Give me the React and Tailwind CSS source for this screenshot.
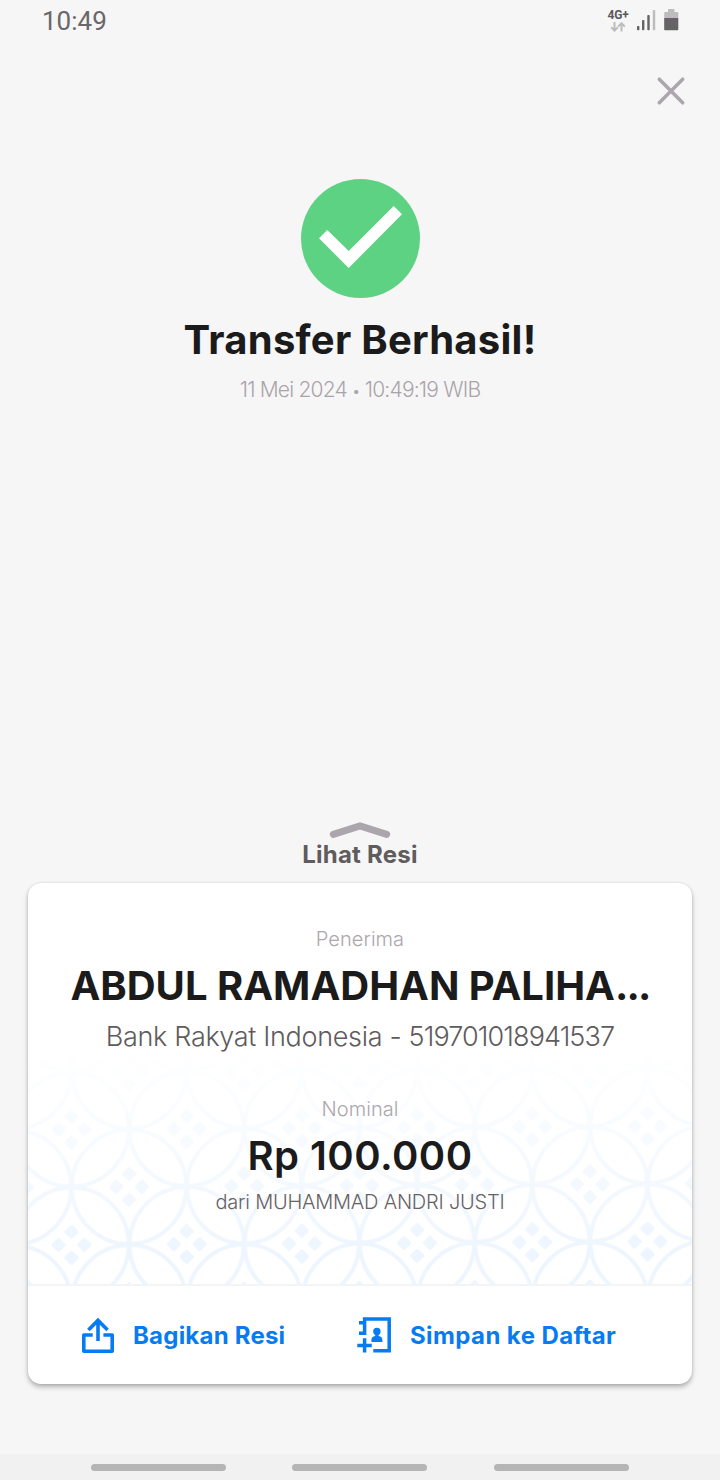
import React from "react";

const receipt = {
  date: "11 Mei 2024",
  time: "10:49:19 WIB",
  recipient: "ABDUL RAMADHAN PALIHA",
  bank: "Bank Rakyat Indonesia -",
  account: "519701018941537",
  amount: "Rp 100.000",
  sender: "dari MUHAMMAD ANDRI JUSTI",
};

const StatusBar = () => (
  <header className="flex h-11 items-start justify-between pl-[42px] pr-[41px] font-['Roboto',sans-serif]">
    <span className="pt-[6px] text-[26px] leading-[30px] text-[#696769]">10:49</span>
    <div className="flex items-start pt-[8px]">
      <div className="flex w-[22px] flex-col items-center">
        <span className="text-[12px] font-bold leading-[14px] tracking-[-0.2px] text-[#5b595b]">4G+</span>
        <svg width="16" height="10" viewBox="0 0 16 10" fill="none" stroke="#bdbbbd" strokeWidth="2">
          <path d="M4.5 0V8.5M1.2 5.2L4.5 8.6L7.8 5.2M11.5 9.5V1M8.2 4.6L11.5 1.2L14.8 4.6" />
        </svg>
      </div>
      <svg className="ml-[8px]" width="19" height="23" viewBox="0 0 19 23">
        <g fill="#656365">
          <rect x="0" y="18" width="2.4" height="4.2" rx="0.8" />
          <rect x="5" y="12" width="2.4" height="10.2" rx="0.8" />
          <rect x="10.3" y="7" width="2.4" height="15.2" rx="0.8" />
        </g>
        <rect x="15.8" y="2" width="2.4" height="20.2" rx="0.8" fill="#bdbbbd" />
      </svg>
      <svg className="ml-[8px]" width="15" height="23" viewBox="0 0 15 23">
        <path d="M4 1.5Q4 1 4.5 1H10Q10.5 1 10.5 1.5V4H13.5Q14.3 4 14.3 4.8V10H0.2V4.8Q0.2 4 1 4H4Z" fill="#bdbbbd" />
        <path d="M0.2 10H14.3V21.4Q14.3 22.2 13.5 22.2H1Q0.2 22.2 0.2 21.4Z" fill="#656365" />
      </svg>
    </div>
  </header>
);

// Faded batik pattern behind the nominal section
const BatikPattern = () => (
  <svg className="absolute bottom-0 left-0 h-[234px] w-full" viewBox="0 0 664 234" preserveAspectRatio="none">
    <defs>
      <pattern
        id="batik"
        width="115.2"
        height="115.4"
        patternUnits="userSpaceOnUse"
        patternTransform="matrix(1 -0.0057 0 1 43.5 194.8)"
      >
        <g fill="none" stroke="#edf5fe" strokeWidth="4">
          <circle cx="0" cy="0" r="57.2" />
          <circle cx="115.2" cy="0" r="57.2" />
          <circle cx="0" cy="115.4" r="57.2" />
          <circle cx="115.2" cy="115.4" r="57.2" />
          <circle cx="57.6" cy="57.7" r="57.2" />
        </g>
        <g fill="#edf5fe">
          {[[0, 0], [115.2, 0], [0, 115.4], [115.2, 115.4], [57.6, 57.7]].map(([x, y]) => (
            <g key={`${x}-${y}`} transform={`translate(${x} ${y}) rotate(45)`}>
              <rect x="-14.6" y="-14.6" width="11" height="11" rx="1.5" />
              <rect x="3.6" y="-14.6" width="11" height="11" rx="1.5" />
              <rect x="-14.6" y="3.6" width="11" height="11" rx="1.5" />
              <rect x="3.6" y="3.6" width="11" height="11" rx="1.5" />
            </g>
          ))}
        </g>
      </pattern>
      <linearGradient id="fade" x1="0" y1="0" x2="0" y2="1">
        <stop offset="0" stopColor="#fff" stopOpacity="1" />
        <stop offset="0.9" stopColor="#fff" stopOpacity="0" />
      </linearGradient>
    </defs>
    <rect width="664" height="234" fill="url(#batik)" />
    <rect width="664" height="234" fill="url(#fade)" />
  </svg>
);

const ShareIcon = () => (
  <svg width="34" height="38" viewBox="81 1316 34 38" fill="none" stroke="#077bf2" strokeWidth="3.6">
    <path d="M92.7 1335H83.8V1351.2H112.2V1335H103.4" strokeLinejoin="round" />
    <path d="M98 1341V1321M88.4 1330L98 1320.4L107.6 1330" />
  </svg>
);

const SaveContactIcon = () => (
  <svg width="36" height="38" viewBox="356 1316 36 38" fill="none" stroke="#077bf2" strokeWidth="3.5">
    <path d="M364.6 1335V1319.1H389.2V1350.8H373.3" />
    <path d="M359 1322.8H366M359 1333.3H366M357.3 1345.4H371.8M364.6 1338.3V1352.6" />
    <circle cx="376.9" cy="1331.5" r="3.7" fill="#077bf2" stroke="none" />
    <path d="M375.2 1333H378.6V1336Q382.4 1336.6 382.4 1340V1342H371.4V1340Q371.4 1336.6 375.2 1336Z" fill="#077bf2" stroke="none" />
  </svg>
);

const App = () => {
  return (
    <div className="flex h-[1480px] w-[720px] flex-col overflow-hidden bg-[#f6f6f6] font-['Inter',sans-serif]">
      <StatusBar />

      {/* Close button */}
      <div className="flex h-[135px] justify-end pr-[34px] pt-[32px]">
        <button aria-label="Tutup" className="h-[30px] w-[30px]">
          <svg width="30" height="30" viewBox="0 0 30 30" stroke="#aba6ac" strokeWidth="3.5" strokeLinecap="round">
            <path d="M3.3 3.2L26.7 26.8M26.7 3.2L3.3 26.8" />
          </svg>
        </button>
      </div>

      {/* Transfer status */}
      <section className="flex h-[641px] flex-col items-center">
        <svg className="ml-px" width="119" height="119" viewBox="0 0 119 119">
          <circle cx="59.5" cy="59.5" r="59.5" fill="#5dd283" />
          <path d="M18 59.3L26.3 51L47.7 72L92.7 27L101 35.3L47.7 89Z" fill="#fff" />
        </svg>
        <h1 className="mt-[18px] whitespace-nowrap text-[40px] font-bold leading-[48px] tracking-[0.25px] text-[#1b1b1b]">Transfer Berhasil!</h1>
        <p className="mt-[13px] whitespace-nowrap text-[21px] font-[350] leading-[26px] tracking-[-0.8px] text-[#aaa4aa]">
          {receipt.date} <span className="align-[1px] text-[15px]">•</span> {receipt.time}
        </p>
      </section>

      {/* Receipt toggle */}
      <button className="flex h-[63px] flex-col items-center">
        <svg width="62" height="18" viewBox="0 0 62 18" fill="none" stroke="#aba5ad" strokeWidth="7" strokeLinecap="round">
          <path d="M4.3 14.3L31 5.8L57.7 14.3" />
        </svg>
        <span className="mt-[2px] whitespace-nowrap text-[24px] font-bold leading-[30px] tracking-[0.25px] text-[#605b5d]">Lihat Resi</span>
      </button>

      {/* Receipt card */}
      <main className="mx-[28px] h-[501px] overflow-hidden rounded-[13px] bg-white shadow-[0_3px_5px_rgba(0,0,0,0.28),0_0_2px_rgba(0,0,0,0.15)]">
        <section className="relative flex h-[401px] flex-col items-center">
          <BatikPattern />
          <div className="relative flex flex-col items-center whitespace-nowrap">
            <p className="mt-[43px] text-[20px] font-[350] leading-[26px] tracking-[0.05px] text-[#aca6ad]">Penerima</p>
            <h2 className="mt-[10px] text-[40px] font-bold leading-[48px] text-[#1b1b1b]">
              {receipt.recipient}<span className="tracking-[-1.8px]">...</span>
            </h2>
            <p className="mt-[10px] text-[27px] font-[350] leading-[34px] tracking-[-0.33px] text-[#605b5d]">
              {receipt.bank} <span className="tracking-[-0.9px]">{receipt.account}</span>
            </p>
            <p className="mt-[42px] text-[20px] font-[350] leading-[26px] tracking-[0.05px] text-[#aca6ad]">Nominal</p>
            <p className="mt-[10px] text-[40px] font-semibold leading-[48px] tracking-[0.45px] text-[#1b1b1b]">{receipt.amount}</p>
            <p className="mt-[9px] text-[20px] font-[350] leading-[26px] tracking-[-0.22px] text-[#666163]">{receipt.sender}</p>
          </div>
        </section>
        <footer className="flex h-[100px] items-center border-t-2 border-[#f3f4f5] text-[24px] font-bold text-[#077bf2]">
          <button className="ml-[53px] flex w-[275px] items-center gap-[18px] whitespace-nowrap">
            <ShareIcon />
            <span className="pt-[2px] tracking-[0.22px]">Bagikan Resi</span>
          </button>
          <button className="flex items-center gap-[18px] whitespace-nowrap">
            <SaveContactIcon />
            <span className="pt-[2px] tracking-[0.4px]">Simpan ke Daftar</span>
          </button>
        </footer>
      </main>

      {/* Android navigation bar */}
      <nav className="mt-auto flex h-[26px] items-center justify-center gap-[66.5px] bg-[#f1f1f1] pr-px">
        <span className="h-[7px] w-[135px] rounded-full bg-[#b5b5b5]" />
        <span className="h-[7px] w-[135px] rounded-full bg-[#b5b5b5]" />
        <span className="h-[7px] w-[135px] rounded-full bg-[#b5b5b5]" />
      </nav>
    </div>
  );
};

export default App;
